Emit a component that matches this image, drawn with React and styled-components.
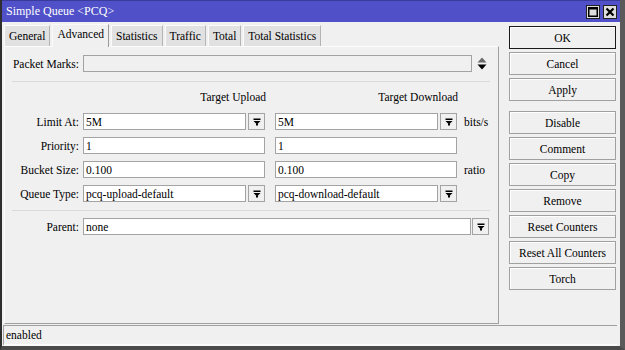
import React from "react";
import styled, { createGlobalStyle, css } from "styled-components";

const GlobalStyle = createGlobalStyle`
  html, body {
    margin: 0;
    padding: 0;
    background: #f0f0f0;
  }
  body {
    font-family: "Liberation Serif", "DejaVu Serif", serif;
    font-size: 11.5px;
    color: #000;
  }
  * {
    box-sizing: border-box;
  }
`;

const Window = styled.div`
  width: 625px;
  height: 350px;
  display: flex;
  flex-direction: column;
  background: #f0f0f0;
  border-left: 2px solid #2e2e2e;
  border-right: 5px solid #5a5a5a;
  border-bottom: 4px solid #4a4a4a;
  overflow: hidden;
  font-family: "Liberation Serif", "DejaVu Serif", serif;
  font-size: 11.5px;
`;

const TitleBar = styled.div`
  height: 22px;
  flex: none;
  background: #5050c8;
  border-top: 1px solid #3a3a9a;
  margin-left: -2px;
  margin-right: -5px;
  padding: 0 8px 0 6px;
  display: flex;
  align-items: center;
  justify-content: space-between;
  color: #fff;
  font-size: 12px;
`;

const TitleButtons = styled.div`
  display: flex;
  gap: 3px;
`;

const TitleButton = styled.div`
  width: 14px;
  height: 14px;
  background: #dedede;
  border: 1px solid #222;
  display: flex;
  align-items: center;
  justify-content: center;
`;

const Body = styled.div`
  flex: none;
  height: 303px;
  display: flex;
  padding: 1px 0 0 2px;
`;

const Main = styled.div`
  width: 495px;
  display: flex;
  flex-direction: column;
`;

const Tabs = styled.div`
  height: 23px;
  display: flex;
  align-items: flex-end;
`;

const Tab = styled.div`
  height: 21px;
  padding: 0 4px;
  margin-right: 2px;
  display: flex;
  align-items: center;
  background: #e1e1e1;
  border-top: 1px solid #fafafa;
  border-left: 1px solid #fafafa;
  border-right: 1px solid #b4b4b4;
  ${({ $active }) =>
    $active &&
    css`
      height: 23px;
      background: #f0f0f0;
      border-right-color: #9a9a9a;
      position: relative;
      top: 1px;
      padding-bottom: 4px;
    `}
`;

const Panel = styled.div`
  height: 278px;
  border-top: 1px solid #fcfcfc;
  border-left: 1px solid #fcfcfc;
  border-right: 1px solid #a0a0a0;
  border-bottom: 1px solid #a0a0a0;
  padding: 8px 0 0 7px;
  display: flex;
  flex-direction: column;
`;

const Row = styled.div`
  height: 17px;
  display: flex;
  align-items: center;
  margin-top: ${({ $top }) => $top}px;
`;

const Label = styled.div`
  width: 67px;
  margin-right: 4px;
  text-align: right;
  white-space: nowrap;
`;

const Cell = styled.div`
  width: ${({ $w }) => $w}px;
  height: 17px;
  display: flex;
  margin-right: ${({ $gap }) => $gap || 0}px;
`;

const Input = styled.div`
  flex: 1;
  height: 17px;
  border: 1px solid #a3a3a3;
  background: ${({ $disabled }) => ($disabled ? "#f0f0f0" : "#fff")};
  padding: 0 2px;
  display: flex;
  align-items: center;
  white-space: nowrap;
  overflow: hidden;
`;

const DropButton = styled.div`
  width: 17px;
  height: 17px;
  flex: none;
  margin-left: ${({ $gap }) => $gap}px;
  border: 1px solid #a3a3a3;
  background: #f0f0f0;
  display: flex;
  align-items: center;
  justify-content: center;
`;

const Unit = styled.div`
  margin-left: 7px;
`;

const Separator = styled.div`
  height: 1px;
  width: 478px;
  background: #dadada;
  margin-top: ${({ $top }) => $top}px;
`;

const HeaderRow = styled.div`
  height: 14px;
  margin-top: 8px;
  display: flex;
  align-items: center;
  padding-left: 71px;
`;

const Header = styled.div`
  width: ${({ $w }) => $w}px;
  margin-right: ${({ $gap }) => $gap || 0}px;
  text-align: right;
  white-space: nowrap;
`;

const Spinner = styled.div`
  margin-left: 5px;
  display: flex;
  align-items: center;
`;

const Side = styled.div`
  width: 107px;
  margin-left: 10px;
  padding-top: 3px;
  display: flex;
  flex-direction: column;
  gap: 3px;
`;

const Button = styled.div`
  height: 23px;
  flex: none;
  display: flex;
  align-items: center;
  justify-content: center;
  background: #f0f0f0;
  border: 1px solid ${({ $default }) => ($default ? "#1a1a1a" : "#a0a0a0")};
  box-shadow: inset 1px 1px 0 #fff;
  margin-top: ${({ $top }) => $top || 0}px;
  white-space: nowrap;
`;

const StatusBar = styled.div`
  height: 21px;
  flex: none;
  margin-left: 1px;
  margin-right: 3px;
  border-top: 1px solid #a0a0a0;
  border-left: 1px solid #a0a0a0;
  border-bottom: 2px solid #fafafa;
  padding: 0 2px;
  display: flex;
  align-items: center;
`;

const DropIcon = () => (
  <svg width="8" height="8" viewBox="0 0 8 8">
    <rect x="0.5" y="0.5" width="7" height="1.5" fill="#000" />
    <polygon points="0.5,3 7.5,3 4,6.6" fill="#000" />
    <rect x="3" y="5.5" width="2" height="2" fill="#000" />
  </svg>
);

const UpDownIcon = () => (
  <svg width="10" height="13" viewBox="0 0 10 13">
    <polygon points="5,0.5 9.5,5.5 0.5,5.5" fill="#6a6a6a" />
    <polygon points="0.5,7.5 9.5,7.5 5,12.5" fill="#000" />
  </svg>
);

const MaxIcon = () => (
  <svg width="10" height="10" viewBox="0 0 10 10">
    <rect x="0.75" y="0.75" width="8.5" height="8.5" fill="none" stroke="#000" strokeWidth="1.5" />
    <rect x="0" y="0" width="10" height="2.5" fill="#000" />
  </svg>
);

const CloseIcon = () => (
  <svg width="10" height="10" viewBox="0 0 10 10">
    <path d="M1.5 1.5 L8.5 8.5 M8.5 1.5 L1.5 8.5" stroke="#000" strokeWidth="2.2" />
  </svg>
);

const tabs = ["General", "Advanced", "Statistics", "Traffic", "Total", "Total Statistics"];

const buttons = [
  { label: "OK", def: true },
  { label: "Cancel" },
  { label: "Apply" },
  { label: "Disable", top: 7 },
  { label: "Comment" },
  { label: "Copy" },
  { label: "Remove" },
  { label: "Reset Counters" },
  { label: "Reset All Counters" },
  { label: "Torch" },
];

const Field = ({ value, drop, w = 182, gap }) => (
  <Cell $w={w} $gap={gap}>
    <Input>{value}</Input>
    {drop && (
      <DropButton $gap={2}>
        <DropIcon />
      </DropButton>
    )}
  </Cell>
);

const App = () => (
  <>
    <GlobalStyle />
    <Window>
      <TitleBar>
        <span>Simple Queue &lt;PCQ&gt;</span>
        <TitleButtons>
          <TitleButton>
            <MaxIcon />
          </TitleButton>
          <TitleButton>
            <CloseIcon />
          </TitleButton>
        </TitleButtons>
      </TitleBar>
      <Body>
        <Main>
          <Tabs>
            {tabs.map((t) => (
              <Tab key={t} $active={t === "Advanced"}>
                {t}
              </Tab>
            ))}
          </Tabs>
          <Panel>
            <Row $top={0}>
              <Label>Packet Marks:</Label>
              <Cell $w={389}>
                <Input $disabled />
              </Cell>
              <Spinner>
                <UpDownIcon />
              </Spinner>
            </Row>
            <Separator $top={9} />
            <HeaderRow>
              <Header $w={183} $gap={10}>Target Upload</Header>
              <Header $w={182}>Target Download</Header>
            </HeaderRow>
            <Row $top={9}>
              <Label>Limit At:</Label>
              <Field value="5M" drop gap={10} />
              <Field value="5M" drop />
              <Unit>bits/s</Unit>
            </Row>
            <Row $top={7}>
              <Label>Priority:</Label>
              <Field value="1" gap={10} />
              <Field value="1" />
            </Row>
            <Row $top={7}>
              <Label>Bucket Size:</Label>
              <Field value="0.100" gap={10} />
              <Field value="0.100" />
              <Unit>ratio</Unit>
            </Row>
            <Row $top={7}>
              <Label>Queue Type:</Label>
              <Field value="pcq-upload-default" drop gap={10} />
              <Field value="pcq-download-default" drop />
            </Row>
            <Separator $top={8} />
            <Row $top={7}>
              <Label>Parent:</Label>
              <Cell $w={406}>
                <Input>none</Input>
                <DropButton $gap={1}>
                  <DropIcon />
                </DropButton>
              </Cell>
            </Row>
          </Panel>
        </Main>
        <Side>
          {buttons.map((b) => (
            <Button key={b.label} $default={b.def} $top={b.top}>
              {b.label}
            </Button>
          ))}
        </Side>
      </Body>
      <StatusBar>enabled</StatusBar>
    </Window>
  </>
);

export default App;
